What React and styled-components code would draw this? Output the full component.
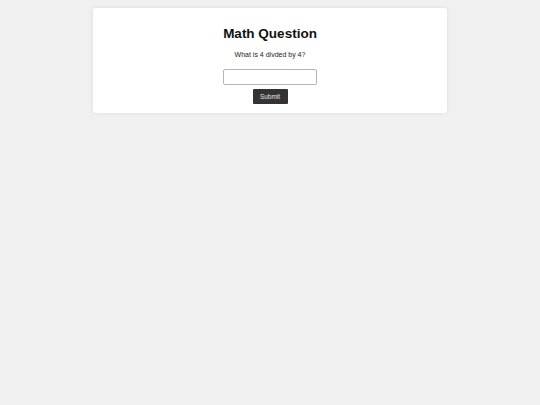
import React, { useState } from 'react';
import styled, { createGlobalStyle } from 'styled-components';

const Global = createGlobalStyle`
  html, body {
    margin: 0;
    padding: 0;
    background: #f0f0f0;
    font-family: "Liberation Sans", Arial, sans-serif;
  }
`;

const Page = styled.div`
  display: flex;
  justify-content: center;
  align-items: flex-start;
  padding-top: 8px;
  min-height: 405px;
  box-sizing: border-box;
`;

const Card = styled.div`
  width: 354px;
  background: #ffffff;
  border-radius: 3px;
  box-shadow: 0 0 4px rgba(0, 0, 0, 0.08);
  padding: 18px 0 8.5px;
  display: flex;
  flex-direction: column;
  align-items: center;
  box-sizing: border-box;
`;

const Title = styled.h1`
  margin: 0;
  font-size: 13.5px;
  line-height: 16px;
  font-weight: bold;
  color: #111;
`;

const Question = styled.p`
  margin: 8.3px 0 0;
  font-size: 7px;
  line-height: 9px;
  color: #222;
`;

const AnswerInput = styled.input`
  margin-top: 9.7px;
  width: 94px;
  height: 16.5px;
  box-sizing: border-box;
  border: 1px solid #b5b5b5;
  border-radius: 2px;
  padding: 0 3px;
  font-size: 7px;
  font-family: inherit;
  outline: none;
`;

const SubmitButton = styled.button`
  margin-top: 4px;
  width: 35px;
  height: 15px;
  padding: 0;
  border: none;
  border-radius: 1px;
  background: #333333;
  color: #e6e6e6;
  font-family: inherit;
  font-size: 6.4px;
  cursor: pointer;
`;

export default function App() {
  const [answer, setAnswer] = useState('');
  return (
    <>
      <Global />
      <Page>
        <Card>
          <Title>Math Question</Title>
          <Question>What is 4 divded by 4?</Question>
          <AnswerInput value={answer} onChange={(e) => setAnswer(e.target.value)} />
          <SubmitButton>Submit</SubmitButton>
        </Card>
      </Page>
    </>
  );
}
